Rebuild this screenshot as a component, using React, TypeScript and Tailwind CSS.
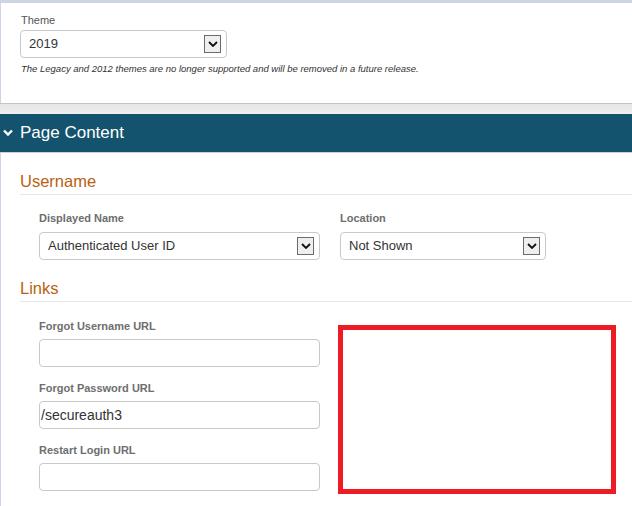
import React from "react";

// small black chevron used inside the select arrow box
function ArrowBox() {
  return (
    <span className="flex h-[18px] w-[17px] items-center justify-center border border-[#6b6b6b] bg-[#efefef]">
      <svg width="10" height="6" viewBox="0 0 10 6">
        <path d="M1 1l4 4 4-4" fill="none" stroke="#111" strokeWidth="1.8" />
      </svg>
    </span>
  );
}

function Select({ value, className }: { value: string; className: string }) {
  return (
    <div
      className={`flex h-[28px] items-center justify-between rounded-[4px] border border-[#c9c9c9] bg-white pl-[8px] pr-[5px] text-[13px] text-[#333] ${className}`}
    >
      <span>{value}</span>
      <ArrowBox />
    </div>
  );
}

function FieldLabel({ children }: { children: React.ReactNode }) {
  return (
    <div className="text-[11px] font-bold leading-[15px] text-[#6e6e6e]">
      {children}
    </div>
  );
}

function TextField({ label, value }: { label: string; value?: string }) {
  return (
    <div className="mb-[14px]">
      <FieldLabel>{label}</FieldLabel>
      <div className="mt-[5px] flex h-[28px] w-[281px] items-center rounded-[4px] border border-[#c9c9c9] bg-white pl-[1px] text-[14px] text-[#333]">
        {value}
      </div>
    </div>
  );
}

function SectionHeading({ children }: { children: React.ReactNode }) {
  return (
    <div className="border-b border-[#e6e6e6] pb-[3px] text-[16.5px] leading-[20px] text-[#b8620f]">
      {children}
    </div>
  );
}

export default function App() {
  return (
    <div className="min-h-[506px] w-full overflow-hidden border-t-[3px] border-[#cbd5e5] bg-white font-['Liberation_Sans',Arial,sans-serif]">
      {/* theme panel */}
      <section className="h-[100px] border-l border-[#cbd5e5] pl-[19px] pt-[10px]">
        <div className="pl-px text-[11px] leading-[15px] text-[#555]">Theme</div>
        <Select value="2019" className="mt-[2px] w-[207px]" />
        <p className="mt-[5px] pl-px text-[9.5px] italic leading-[12px] text-[#333]">
          The Legacy and 2012 themes are no longer supported and will be removed in a future release.
        </p>
      </section>

      <div className="h-[11px] border-t border-[#c4c4c4] bg-gradient-to-b from-[#e6e6e6] to-[#eeeeee]" />

      <div className="flex h-[39px] items-center border-b border-[#cdd2d6] bg-[#14536e] text-white">
        <svg width="20" height="8" viewBox="0 0 20 8" className="shrink-0">
          <path d="M4 1.5l4 4 4-4" fill="none" stroke="#fff" strokeWidth="2.4" />
        </svg>
        <span className="text-[17px] leading-[20px]">Page Content</span>
      </div>

      {/* page content body */}
      <section className="border-l border-[#cbd5e5] pb-[20px] pl-[19px] pt-[18px]">
        <SectionHeading>Username</SectionHeading>
        <div className="flex gap-[20px] pl-[19px] pt-[16px]">
          <div className="w-[281px]">
            <FieldLabel>Displayed Name</FieldLabel>
            <Select value="Authenticated User ID" className="mt-[6px] w-[281px]" />
          </div>
          <div className="w-[206px]">
            <FieldLabel>Location</FieldLabel>
            <Select value="Not Shown" className="mt-[6px] w-[206px]" />
          </div>
        </div>

        <div className="mt-[18px]">
          <SectionHeading>Links</SectionHeading>
        </div>
        <div className="flex pl-[19px] pt-[17px]">
          <div className="w-[281px]">
            <TextField label="Forgot Username URL" />
            <TextField label="Forgot Password URL" value="/secureauth3" />
            <TextField label="Restart Login URL" />
          </div>
          <div className="ml-[18px] mt-[6px] h-[169px] w-[278px] border-[5px] border-[#ed1c24]" />
        </div>
      </section>
    </div>
  );
}
